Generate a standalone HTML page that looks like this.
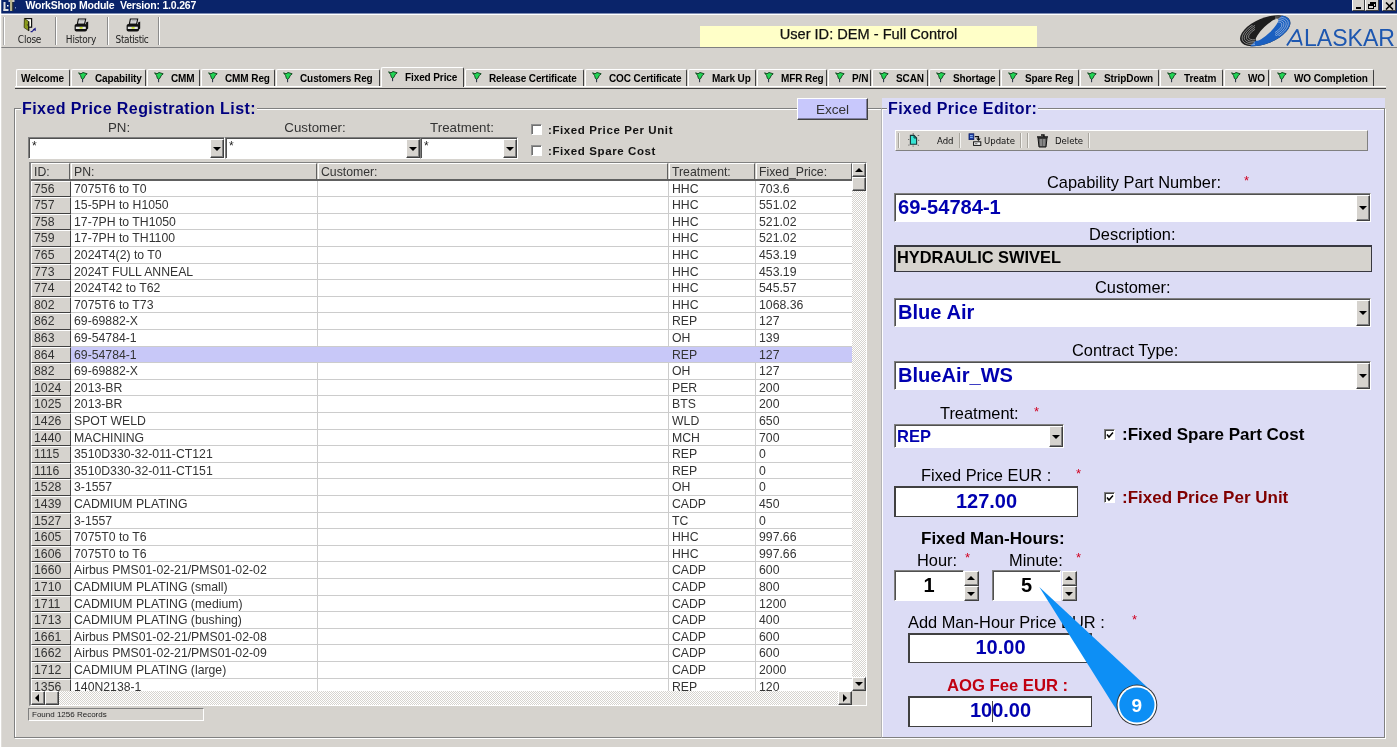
<!DOCTYPE html>
<html><head><meta charset="utf-8"><title>WorkShop Module</title>
<style>
html,body{margin:0;padding:0;}
body{width:1398px;height:749px;overflow:hidden;background:#d6d3ce;position:relative;font-family:"Liberation Sans",sans-serif;color:#000;}
div,span{box-sizing:border-box;}
#wrap{position:absolute;left:0;top:0;width:1398px;height:749px;will-change:transform;}
.abs{position:absolute;}
#winl{position:absolute;left:0;top:0;width:1px;height:749px;background:#fff;z-index:5;box-shadow:1px 0 0 rgba(255,255,255,0.25);}
#winr{position:absolute;left:1397px;top:0;width:1px;height:749px;background:#fff;}
#winb{position:absolute;left:0;top:747px;width:1398px;height:2px;background:#fff;}
#title{position:absolute;left:1px;top:0;width:1396px;height:13px;box-shadow:0 1px 0 #7f8db4;background:#0a246a;color:#fff;font:bold 10.5px "Liberation Sans",sans-serif;letter-spacing:-0.2px;line-height:13.5px;white-space:pre;}
#title span{position:absolute;left:24.5px;top:-1px;}
.tbtn{position:absolute;top:-1px;height:12px;background:#d6d3ce;border:1px solid;border-color:#fff #404040 #404040 #fff;}
#tool{position:absolute;left:1px;top:14px;width:1396px;height:34px;border-top:1px solid #fff;border-bottom:1px solid #808080;}
.sep{position:absolute;top:17px;width:2px;height:28px;border-left:1px solid #8c8c8c;border-right:1px solid #fff;}
.tb{position:absolute;top:33px;font:10px "DejaVu Sans Condensed","Liberation Sans",sans-serif;color:#222;text-align:center;line-height:14px;letter-spacing:-0.25px;}
#user{position:absolute;left:700px;top:26px;width:337px;height:21px;background:#ffffc8;font:14.6px "Liberation Sans",sans-serif;color:#111;text-align:center;line-height:17px;-webkit-text-stroke:0.25px #111;}
#logo{position:absolute;left:1236px;top:15px;width:160px;height:33px;}
/* tabs */
#tabs{position:absolute;left:0;top:0;}
#tabline{position:absolute;left:15px;top:86px;width:1371px;height:3px;border-top:1px solid #fff;border-bottom:1px solid #404040;background:#d6d3ce;}
.tab{position:absolute;top:69px;height:17px;border-left:1px solid #fff;border-top:1px solid #fff;border-right:1px solid #404040;border-radius:2px 2px 0 0;font:bold 10px "Liberation Sans",sans-serif;letter-spacing:-0.1px;color:#000;line-height:17px;white-space:nowrap;text-align:left;}
.tab span{position:absolute;left:23px;top:0;}
.tab:first-child span{left:4px;}
.tab .flag{position:absolute;left:6px;top:2px;}
.tab.sel{top:67px;height:20px;background:#d6d3ce;z-index:2;}
.tab.sel span{top:1px;}
.tab.sel .flag{top:3px;}
/* fieldsets */
.fs{position:absolute;border:1px solid #808080;box-shadow:1px 1px 0 #fff, inset 1px 1px 0 #fff;}
.legend{position:absolute;letter-spacing:0.42px;font:bold 16px "Liberation Sans",sans-serif;color:#000080;white-space:nowrap;line-height:18px;padding:0 1px;}
.lbl{position:absolute;white-space:nowrap;text-align:center;}
.combo{position:absolute;background:#fff;border:1px solid;border-color:#808080 #fff #fff #808080;box-shadow:inset 1px 1px 0 #505050;}
.combo .btn,.sb{position:absolute;background:#d6d3ce;border:1px solid;border-color:#fff #404040 #404040 #fff;box-shadow:inset -1px -1px 0 #808080;}
.arrow{position:absolute;width:0;height:0;border-left:3px solid transparent;border-right:3px solid transparent;border-top:3px solid #000;}
.arrow.big{border-left-width:4px;border-right-width:4px;border-top-width:4px;}
.chk{position:absolute;width:10px;height:10px;background:#fff;border:1px solid;border-color:#808080 #fff #fff #808080;box-shadow:inset 1px 1px 0 #404040;}
/* grid */
#grid{position:absolute;left:29px;top:162px;width:838px;height:544px;background:#fff;border-left:2px solid #808080;border-top:1px solid #808080;border-right:1px solid #fff;border-bottom:1px solid #fff;overflow:hidden;font:12.25px "Liberation Sans",sans-serif;color:#333;}
#grid .hrow{position:absolute;left:0;top:0;width:821px;height:18px;background:#d6d3ce;border-bottom:2px solid #606060;}
#grid .hc{position:absolute;top:0;height:16px;border-left:1px solid #fff;border-top:1px solid #fff;border-right:1px solid #606060;padding-left:2px;line-height:17px;white-space:nowrap;box-sizing:content-box;}
#grid .hc{box-sizing:border-box;width:auto;}
.row{position:absolute;left:0;width:821px;border-bottom:1px solid #cccccc;}
.row .idc{position:absolute;left:0;top:0;width:40px;height:100%;background:#d6d3ce;border-left:1px solid #fff;border-top:1px solid #fff;border-right:1px solid #404040;border-bottom:1px solid #404040;padding-left:2px;line-height:14px;box-sizing:border-box;bottom:-1px;height:calc(100% + 1px);}
.row .c{position:absolute;top:0;height:100%;border-right:1px solid #cccccc;padding-left:3px;line-height:16px;white-space:nowrap;overflow:hidden;}
.c1{left:40px;width:247px;}
.c2{left:287px;width:351px;}
.c3{left:638px;width:87px;}
.c4{left:725px;width:96px;border-right:none !important;}
.rsel .c{background:#c8c8f8;border-right-color:#c8c8f8;}
.dither{background-image:conic-gradient(#fff 25%,#d6d3ce 0 50%,#fff 0 75%,#d6d3ce 0);background-size:2px 2px;}
/* right panel */
#rp{position:absolute;left:882px;top:98px;width:503px;height:639px;background:#dcdcf5;}
.rl{position:absolute;white-space:nowrap;margin-top:1px;font:16.4px "Liberation Sans",sans-serif;color:#000;line-height:18px;}
.red{color:#d00020;}
.inp{position:absolute;background:#fff;border:1px solid #404040;border-top:2px solid #404040;border-left:2px solid #404040;text-align:center;font:bold 20px "Liberation Sans",sans-serif;color:#0000b0;white-space:nowrap;}

</style></head><body><div id="wrap">
<div id="winl"></div><div id="winr"></div><div id="winb"></div>
<div id="title"><svg class="abs" style="left:2px;top:0" width="14" height="13" viewBox="0 0 14 13"><rect x="0.5" y="2" width="2" height="9" fill="#e0e0e0"/><rect x="0.5" y="9" width="5" height="2" fill="#e0e0e0"/><rect x="5.5" y="0" width="6" height="2" fill="#c8c8c8"/><rect x="7" y="0" width="2.4" height="11" fill="#b8b48c"/><rect x="9.4" y="2" width="1" height="9" fill="#303020"/><rect x="4" y="5" width="1.5" height="1.5" fill="#fff"/><rect x="12" y="7" width="1" height="1.5" fill="#8090c0"/></svg><span>WorkShop Module  Version: 1.0.267</span>
<div class="tbtn" style="left:1351px;width:13px"><div class="abs" style="left:3px;top:7px;width:5px;height:2px;background:#000"></div></div>
<div class="tbtn" style="left:1364px;width:14px"><div class="abs" style="left:4px;top:2px;width:6px;height:5px;border:1px solid #000;border-top-width:2px"></div><div class="abs" style="left:2px;top:4px;width:6px;height:5px;border:1px solid #000;border-top-width:2px;background:#d6d3ce"></div></div>
<div class="tbtn" style="left:1381px;width:14px"><svg class="abs" style="left:2px;top:2px" width="9" height="8" viewBox="0 0 9 8"><path d="M1 0.5 L8 7.5 M8 0.5 L1 7.5" stroke="#000" stroke-width="1.6"/></svg></div>
</div>
<div id="tool"></div>
<div class="sep" style="left:3px;border-left-color:#a8a8a8"></div>
<div class="sep" style="left:55px"></div>
<div class="sep" style="left:107px"></div>
<div class="sep" style="left:158px"></div>
<!-- close icon -->
<svg class="abs" style="left:23px;top:17px" width="15" height="16" viewBox="0 0 15 16"><rect x="2.2" y="1.6" width="6.4" height="8.6" fill="#fffff4" stroke="#111" stroke-width="1.2"/><path d="M1.4 1.4 L5.8 4.6 V13.8 L1.1 10.6 Z" fill="#8a9a1c" stroke="#2a2a08" stroke-width="0.7"/><path d="M5.7 4.4 V13.9" stroke="#111" stroke-width="1"/><path d="M3.9 7.6 L4.9 8.2" stroke="#222" stroke-width="0.9"/><path d="M7.6 14.6 H9.4 M9.2 14.4 L11 12.6" stroke="#1c1c88" stroke-width="1.1" fill="none"/><path d="M9.6 12.4 L12.6 10.6 L12.9 14 Z" fill="#1c1c88"/></svg>
<div class="tb" style="left:7px;width:45px">Close</div>
<!-- printer icons -->
<svg class="abs" style="left:74px;top:18px" width="16" height="15" viewBox="0 0 16 15"><path d="M4.4 1 H11.6 L10.6 6 H3.4 Z" fill="#ececec" stroke="#111" stroke-width="1.2"/><path d="M5.5 2.6 H10 M5.2 4 H9.7" stroke="#999" stroke-width="0.7"/><path d="M12 4.6 L14.2 3.6 V10.4 L12.4 12 Z" fill="#111"/><rect x="0.6" y="6" width="12.4" height="7.6" rx="1.8" fill="#111"/><rect x="1.8" y="8.7" width="10" height="2.3" fill="#e4e4e4"/><rect x="5.6" y="9.1" width="3" height="1.5" fill="#c4e010"/></svg>
<div class="tb" style="left:57px;width:48px">History</div>
<svg class="abs" style="left:126px;top:18px" width="16" height="15" viewBox="0 0 16 15"><path d="M4.4 1 H11.6 L10.6 6 H3.4 Z" fill="#ececec" stroke="#111" stroke-width="1.2"/><path d="M5.5 2.6 H10 M5.2 4 H9.7" stroke="#999" stroke-width="0.7"/><path d="M12 4.6 L14.2 3.6 V10.4 L12.4 12 Z" fill="#111"/><rect x="0.6" y="6" width="12.4" height="7.6" rx="1.8" fill="#111"/><rect x="1.8" y="8.7" width="10" height="2.3" fill="#e4e4e4"/><rect x="5.6" y="9.1" width="3" height="1.5" fill="#c4e010"/></svg>
<div class="tb" style="left:108px;width:48px;letter-spacing:-0.4px">Statistic</div>
<div id="user">User ID: DEM - Full Control</div>
<div id="logo"><svg width="162" height="34" viewBox="0 0 162 34">
<defs><clipPath id="lgc"><ellipse cx="0" cy="0" rx="26.7" ry="12.7" transform="translate(29.2,15.8) rotate(-22.5)"/></clipPath>
<clipPath id="lge"><rect x="0" y="10" width="19" height="24"/><rect x="39" y="0" width="20" height="21"/></clipPath></defs>
<ellipse cx="0" cy="0" rx="26.7" ry="12.7" transform="translate(29.2,15.8) rotate(-22.5)" fill="#1e1e1e"/>
<g clip-path="url(#lgc)"><rect x="-40" y="0" width="80" height="40" transform="translate(31,14.8) rotate(-44)" fill="#1a5fc0"/>
<g clip-path="url(#lge)"><g fill="none" stroke="#f0f0f0" stroke-width="0.6" opacity="0.7" transform="translate(29.2,15.8) rotate(-22.5)"><ellipse rx="24.6" ry="11"/><ellipse rx="22.4" ry="9.4"/><ellipse rx="20.2" ry="7.8"/><ellipse rx="18" ry="6.2"/></g></g></g>
<ellipse cx="0" cy="0" rx="15.3" ry="3.8" transform="translate(31,14.8) rotate(-44)" fill="#d6d3ce"/>
<path d="M51 30.6 L61.3 14.6 L65.8 30.6 M55.5 26 H64.5" fill="none" stroke="#1d57b0" stroke-width="1.9" stroke-linejoin="bevel"/>
<text x="68" y="30.6" font-family="Liberation Sans, sans-serif" font-size="23" fill="#1d57b0" textLength="91" lengthAdjust="spacingAndGlyphs">LASKAR</text>
</svg></div>
<div id="tabline"></div>
<div id="tabs">
<div class="tab" style="left:16px;width:54px"><span>Welcome</span></div>
<div class="tab" style="left:71px;width:75px"><svg class="flag" viewBox="0 0 10 11" width="10" height="11"><path d="M0.6 0.8 L3 1.8 L5 0.5 L9.2 1.8 L7.2 3.6 L5.8 6.4 L4.6 7.2 L3.4 6.4 L2.6 3.6 Z" fill="#22d455" stroke="#0c3c18" stroke-width="0.9"/><path d="M4.6 7 L4.6 10.2" stroke="#20283c" stroke-width="1"/></svg><span>Capability</span></div>
<div class="tab" style="left:147px;width:53px"><svg class="flag" viewBox="0 0 10 11" width="10" height="11"><path d="M0.6 0.8 L3 1.8 L5 0.5 L9.2 1.8 L7.2 3.6 L5.8 6.4 L4.6 7.2 L3.4 6.4 L2.6 3.6 Z" fill="#22d455" stroke="#0c3c18" stroke-width="0.9"/><path d="M4.6 7 L4.6 10.2" stroke="#20283c" stroke-width="1"/></svg><span>CMM</span></div>
<div class="tab" style="left:201px;width:74px"><svg class="flag" viewBox="0 0 10 11" width="10" height="11"><path d="M0.6 0.8 L3 1.8 L5 0.5 L9.2 1.8 L7.2 3.6 L5.8 6.4 L4.6 7.2 L3.4 6.4 L2.6 3.6 Z" fill="#22d455" stroke="#0c3c18" stroke-width="0.9"/><path d="M4.6 7 L4.6 10.2" stroke="#20283c" stroke-width="1"/></svg><span>CMM Reg</span></div>
<div class="tab" style="left:276px;width:104px"><svg class="flag" viewBox="0 0 10 11" width="10" height="11"><path d="M0.6 0.8 L3 1.8 L5 0.5 L9.2 1.8 L7.2 3.6 L5.8 6.4 L4.6 7.2 L3.4 6.4 L2.6 3.6 Z" fill="#22d455" stroke="#0c3c18" stroke-width="0.9"/><path d="M4.6 7 L4.6 10.2" stroke="#20283c" stroke-width="1"/></svg><span>Customers Reg</span></div>
<div class="tab sel" style="left:381px;width:83px"><svg class="flag" viewBox="0 0 10 11" width="10" height="11"><path d="M0.6 0.8 L3 1.8 L5 0.5 L9.2 1.8 L7.2 3.6 L5.8 6.4 L4.6 7.2 L3.4 6.4 L2.6 3.6 Z" fill="#22d455" stroke="#0c3c18" stroke-width="0.9"/><path d="M4.6 7 L4.6 10.2" stroke="#20283c" stroke-width="1"/></svg><span>Fixed Price</span></div>
<div class="tab" style="left:465px;width:119px"><svg class="flag" viewBox="0 0 10 11" width="10" height="11"><path d="M0.6 0.8 L3 1.8 L5 0.5 L9.2 1.8 L7.2 3.6 L5.8 6.4 L4.6 7.2 L3.4 6.4 L2.6 3.6 Z" fill="#22d455" stroke="#0c3c18" stroke-width="0.9"/><path d="M4.6 7 L4.6 10.2" stroke="#20283c" stroke-width="1"/></svg><span>Release Certificate</span></div>
<div class="tab" style="left:585px;width:102px"><svg class="flag" viewBox="0 0 10 11" width="10" height="11"><path d="M0.6 0.8 L3 1.8 L5 0.5 L9.2 1.8 L7.2 3.6 L5.8 6.4 L4.6 7.2 L3.4 6.4 L2.6 3.6 Z" fill="#22d455" stroke="#0c3c18" stroke-width="0.9"/><path d="M4.6 7 L4.6 10.2" stroke="#20283c" stroke-width="1"/></svg><span>COC Certificate</span></div>
<div class="tab" style="left:688px;width:68px"><svg class="flag" viewBox="0 0 10 11" width="10" height="11"><path d="M0.6 0.8 L3 1.8 L5 0.5 L9.2 1.8 L7.2 3.6 L5.8 6.4 L4.6 7.2 L3.4 6.4 L2.6 3.6 Z" fill="#22d455" stroke="#0c3c18" stroke-width="0.9"/><path d="M4.6 7 L4.6 10.2" stroke="#20283c" stroke-width="1"/></svg><span>Mark Up</span></div>
<div class="tab" style="left:757px;width:70px"><svg class="flag" viewBox="0 0 10 11" width="10" height="11"><path d="M0.6 0.8 L3 1.8 L5 0.5 L9.2 1.8 L7.2 3.6 L5.8 6.4 L4.6 7.2 L3.4 6.4 L2.6 3.6 Z" fill="#22d455" stroke="#0c3c18" stroke-width="0.9"/><path d="M4.6 7 L4.6 10.2" stroke="#20283c" stroke-width="1"/></svg><span>MFR Reg</span></div>
<div class="tab" style="left:828px;width:43px"><svg class="flag" viewBox="0 0 10 11" width="10" height="11"><path d="M0.6 0.8 L3 1.8 L5 0.5 L9.2 1.8 L7.2 3.6 L5.8 6.4 L4.6 7.2 L3.4 6.4 L2.6 3.6 Z" fill="#22d455" stroke="#0c3c18" stroke-width="0.9"/><path d="M4.6 7 L4.6 10.2" stroke="#20283c" stroke-width="1"/></svg><span>P/N</span></div>
<div class="tab" style="left:872px;width:56px"><svg class="flag" viewBox="0 0 10 11" width="10" height="11"><path d="M0.6 0.8 L3 1.8 L5 0.5 L9.2 1.8 L7.2 3.6 L5.8 6.4 L4.6 7.2 L3.4 6.4 L2.6 3.6 Z" fill="#22d455" stroke="#0c3c18" stroke-width="0.9"/><path d="M4.6 7 L4.6 10.2" stroke="#20283c" stroke-width="1"/></svg><span>SCAN</span></div>
<div class="tab" style="left:929px;width:71px"><svg class="flag" viewBox="0 0 10 11" width="10" height="11"><path d="M0.6 0.8 L3 1.8 L5 0.5 L9.2 1.8 L7.2 3.6 L5.8 6.4 L4.6 7.2 L3.4 6.4 L2.6 3.6 Z" fill="#22d455" stroke="#0c3c18" stroke-width="0.9"/><path d="M4.6 7 L4.6 10.2" stroke="#20283c" stroke-width="1"/></svg><span>Shortage</span></div>
<div class="tab" style="left:1001px;width:78px"><svg class="flag" viewBox="0 0 10 11" width="10" height="11"><path d="M0.6 0.8 L3 1.8 L5 0.5 L9.2 1.8 L7.2 3.6 L5.8 6.4 L4.6 7.2 L3.4 6.4 L2.6 3.6 Z" fill="#22d455" stroke="#0c3c18" stroke-width="0.9"/><path d="M4.6 7 L4.6 10.2" stroke="#20283c" stroke-width="1"/></svg><span>Spare Reg</span></div>
<div class="tab" style="left:1080px;width:79px"><svg class="flag" viewBox="0 0 10 11" width="10" height="11"><path d="M0.6 0.8 L3 1.8 L5 0.5 L9.2 1.8 L7.2 3.6 L5.8 6.4 L4.6 7.2 L3.4 6.4 L2.6 3.6 Z" fill="#22d455" stroke="#0c3c18" stroke-width="0.9"/><path d="M4.6 7 L4.6 10.2" stroke="#20283c" stroke-width="1"/></svg><span>StripDown</span></div>
<div class="tab" style="left:1160px;width:63px"><svg class="flag" viewBox="0 0 10 11" width="10" height="11"><path d="M0.6 0.8 L3 1.8 L5 0.5 L9.2 1.8 L7.2 3.6 L5.8 6.4 L4.6 7.2 L3.4 6.4 L2.6 3.6 Z" fill="#22d455" stroke="#0c3c18" stroke-width="0.9"/><path d="M4.6 7 L4.6 10.2" stroke="#20283c" stroke-width="1"/></svg><span>Treatm</span></div>
<div class="tab" style="left:1224px;width:45px"><svg class="flag" viewBox="0 0 10 11" width="10" height="11"><path d="M0.6 0.8 L3 1.8 L5 0.5 L9.2 1.8 L7.2 3.6 L5.8 6.4 L4.6 7.2 L3.4 6.4 L2.6 3.6 Z" fill="#22d455" stroke="#0c3c18" stroke-width="0.9"/><path d="M4.6 7 L4.6 10.2" stroke="#20283c" stroke-width="1"/></svg><span>WO</span></div>
<div class="tab" style="left:1270px;width:104px"><svg class="flag" viewBox="0 0 10 11" width="10" height="11"><path d="M0.6 0.8 L3 1.8 L5 0.5 L9.2 1.8 L7.2 3.6 L5.8 6.4 L4.6 7.2 L3.4 6.4 L2.6 3.6 Z" fill="#22d455" stroke="#0c3c18" stroke-width="0.9"/><path d="M4.6 7 L4.6 10.2" stroke="#20283c" stroke-width="1"/></svg><span>WO Completion</span></div>
</div>
<div class="fs" style="left:14px;top:108px;width:880px;height:630px"></div>
<div class="legend" style="left:21px;top:99.5px;background:#d6d3ce">Fixed Price Registration List:</div>
<div class="lbl" style="left:79px;top:119px;width:80px;font-size:13.3px;color:#333;line-height:18px">PN:</div>
<div class="lbl" style="left:265px;top:119px;width:100px;font-size:13.3px;color:#333;line-height:18px">Customer:</div>
<div class="lbl" style="left:412px;top:119px;width:100px;font-size:13.3px;color:#333;line-height:18px">Treatment:</div>
<div class="combo" style="left:28px;top:137px;width:197px;height:22px"><span class="abs" style="left:3px;top:2px;font-size:12px;line-height:12px;color:#222">*</span><div class="btn" style="right:0;top:1px;width:14px;height:19px"><div class="arrow big" style="left:2px;top:7px"></div></div></div>
<div class="combo" style="left:225px;top:137px;width:196px;height:22px"><span class="abs" style="left:3px;top:2px;font-size:12px;line-height:12px;color:#222">*</span><div class="btn" style="right:0;top:1px;width:14px;height:19px"><div class="arrow big" style="left:2px;top:7px"></div></div></div>
<div class="combo" style="left:420px;top:137px;width:98px;height:22px"><span class="abs" style="left:3px;top:2px;font-size:12px;line-height:12px;color:#222">*</span><div class="btn" style="right:0;top:1px;width:14px;height:19px"><div class="arrow big" style="left:2px;top:7px"></div></div></div>
<div class="chk" style="left:531px;top:124px;width:11px;height:11px;border-color:#909090 #fff #fff #909090;box-shadow:inset 1px 1px 0 #707070"></div>
<div class="chk" style="left:531px;top:145px;width:11px;height:11px;border-color:#909090 #fff #fff #909090;box-shadow:inset 1px 1px 0 #707070"></div>
<div class="lbl" style="left:548px;top:123px;font:bold 11.5px 'Liberation Sans',sans-serif;letter-spacing:0.6px;color:#111;line-height:14px">:Fixed Price Per Unit</div>
<div class="lbl" style="left:548px;top:144px;font:bold 11.5px 'Liberation Sans',sans-serif;letter-spacing:0.6px;color:#111;line-height:14px">:Fixed Spare Cost</div>
<div class="abs" style="left:797px;top:98px;width:71px;height:22px;background:#c8c8fc;border:1px solid;border-color:#fff #404040 #404040 #fff;box-shadow:inset -1px -1px 0 #8080a0;font-size:13.6px;color:#333;text-align:center;line-height:22px">Excel</div>
<div id="grid">
<div class="hrow"><div class="hc" style="left:0;width:39px">ID:</div><div class="hc" style="left:40px;width:246px">PN:</div><div class="hc" style="left:287px;width:350px">Customer:</div><div class="hc" style="left:638px;width:86px">Treatment:</div><div class="hc" style="left:725px;width:96px">Fixed_Price:</div></div>
<div class="row" style="top:18px;height:16px"><div class="idc">756</div><div class="c c1">7075T6 to T0</div><div class="c c2"></div><div class="c c3">HHC</div><div class="c c4">703.6</div></div>
<div class="row" style="top:34px;height:17px"><div class="idc">757</div><div class="c c1">15-5PH to H1050</div><div class="c c2"></div><div class="c c3">HHC</div><div class="c c4">551.02</div></div>
<div class="row" style="top:51px;height:16px"><div class="idc">758</div><div class="c c1">17-7PH to TH1050</div><div class="c c2"></div><div class="c c3">HHC</div><div class="c c4">521.02</div></div>
<div class="row" style="top:67px;height:17px"><div class="idc">759</div><div class="c c1">17-7PH to TH1100</div><div class="c c2"></div><div class="c c3">HHC</div><div class="c c4">521.02</div></div>
<div class="row" style="top:84px;height:17px"><div class="idc">765</div><div class="c c1">2024T4(2) to T0</div><div class="c c2"></div><div class="c c3">HHC</div><div class="c c4">453.19</div></div>
<div class="row" style="top:101px;height:16px"><div class="idc">773</div><div class="c c1">2024T FULL ANNEAL</div><div class="c c2"></div><div class="c c3">HHC</div><div class="c c4">453.19</div></div>
<div class="row" style="top:117px;height:17px"><div class="idc">774</div><div class="c c1">2024T42 to T62</div><div class="c c2"></div><div class="c c3">HHC</div><div class="c c4">545.57</div></div>
<div class="row" style="top:134px;height:16px"><div class="idc">802</div><div class="c c1">7075T6 to T73</div><div class="c c2"></div><div class="c c3">HHC</div><div class="c c4">1068.36</div></div>
<div class="row" style="top:150px;height:17px"><div class="idc">862</div><div class="c c1">69-69882-X</div><div class="c c2"></div><div class="c c3">REP</div><div class="c c4">127</div></div>
<div class="row" style="top:167px;height:17px"><div class="idc">863</div><div class="c c1">69-54784-1</div><div class="c c2"></div><div class="c c3">OH</div><div class="c c4">139</div></div>
<div class="row rsel" style="top:184px;height:16px"><div class="idc">864</div><div class="c c1">69-54784-1</div><div class="c c2"></div><div class="c c3">REP</div><div class="c c4">127</div></div>
<div class="row" style="top:200px;height:17px"><div class="idc">882</div><div class="c c1">69-69882-X</div><div class="c c2"></div><div class="c c3">OH</div><div class="c c4">127</div></div>
<div class="row" style="top:217px;height:16px"><div class="idc">1024</div><div class="c c1">2013-BR</div><div class="c c2"></div><div class="c c3">PER</div><div class="c c4">200</div></div>
<div class="row" style="top:233px;height:17px"><div class="idc">1025</div><div class="c c1">2013-BR</div><div class="c c2"></div><div class="c c3">BTS</div><div class="c c4">200</div></div>
<div class="row" style="top:250px;height:17px"><div class="idc">1426</div><div class="c c1">SPOT WELD</div><div class="c c2"></div><div class="c c3">WLD</div><div class="c c4">650</div></div>
<div class="row" style="top:267px;height:16px"><div class="idc">1440</div><div class="c c1">MACHINING</div><div class="c c2"></div><div class="c c3">MCH</div><div class="c c4">700</div></div>
<div class="row" style="top:283px;height:17px"><div class="idc">1115</div><div class="c c1">3510D330-32-011-CT121</div><div class="c c2"></div><div class="c c3">REP</div><div class="c c4">0</div></div>
<div class="row" style="top:300px;height:16px"><div class="idc">1116</div><div class="c c1">3510D330-32-011-CT151</div><div class="c c2"></div><div class="c c3">REP</div><div class="c c4">0</div></div>
<div class="row" style="top:316px;height:17px"><div class="idc">1528</div><div class="c c1">3-1557</div><div class="c c2"></div><div class="c c3">OH</div><div class="c c4">0</div></div>
<div class="row" style="top:333px;height:17px"><div class="idc">1439</div><div class="c c1">CADMIUM PLATING</div><div class="c c2"></div><div class="c c3">CADP</div><div class="c c4">450</div></div>
<div class="row" style="top:350px;height:16px"><div class="idc">1527</div><div class="c c1">3-1557</div><div class="c c2"></div><div class="c c3">TC</div><div class="c c4">0</div></div>
<div class="row" style="top:366px;height:17px"><div class="idc">1605</div><div class="c c1">7075T0 to T6</div><div class="c c2"></div><div class="c c3">HHC</div><div class="c c4">997.66</div></div>
<div class="row" style="top:383px;height:16px"><div class="idc">1606</div><div class="c c1">7075T0 to T6</div><div class="c c2"></div><div class="c c3">HHC</div><div class="c c4">997.66</div></div>
<div class="row" style="top:399px;height:17px"><div class="idc">1660</div><div class="c c1">Airbus PMS01-02-21/PMS01-02-02</div><div class="c c2"></div><div class="c c3">CADP</div><div class="c c4">600</div></div>
<div class="row" style="top:416px;height:17px"><div class="idc">1710</div><div class="c c1">CADMIUM PLATING (small)</div><div class="c c2"></div><div class="c c3">CADP</div><div class="c c4">800</div></div>
<div class="row" style="top:433px;height:16px"><div class="idc">1711</div><div class="c c1">CADMIUM PLATING (medium)</div><div class="c c2"></div><div class="c c3">CADP</div><div class="c c4">1200</div></div>
<div class="row" style="top:449px;height:17px"><div class="idc">1713</div><div class="c c1">CADMIUM PLATING (bushing)</div><div class="c c2"></div><div class="c c3">CADP</div><div class="c c4">400</div></div>
<div class="row" style="top:466px;height:16px"><div class="idc">1661</div><div class="c c1">Airbus PMS01-02-21/PMS01-02-08</div><div class="c c2"></div><div class="c c3">CADP</div><div class="c c4">600</div></div>
<div class="row" style="top:482px;height:17px"><div class="idc">1662</div><div class="c c1">Airbus PMS01-02-21/PMS01-02-09</div><div class="c c2"></div><div class="c c3">CADP</div><div class="c c4">600</div></div>
<div class="row" style="top:499px;height:17px"><div class="idc">1712</div><div class="c c1">CADMIUM PLATING (large)</div><div class="c c2"></div><div class="c c3">CADP</div><div class="c c4">2000</div></div>
<div class="row" style="top:516px;height:16px"><div class="idc">1356</div><div class="c c1">140N2138-1</div><div class="c c2"></div><div class="c c3">REP</div><div class="c c4">120</div></div>
<div class="abs dither" style="left:821px;top:0;width:14px;height:528px"></div>
<div class="sb" style="left:821px;top:0;width:14px;height:14px"><div class="arrow big" style="left:2px;top:4px;border-top:none;border-bottom:4px solid #000"></div></div>
<div class="sb" style="left:821px;top:14px;width:14px;height:14px"></div>
<div class="sb" style="left:821px;top:514px;width:14px;height:14px"><div class="arrow big" style="left:2px;top:4px"></div></div>
<div class="abs dither" style="left:0;top:528px;width:821px;height:14px"></div>
<div class="abs" style="left:821px;top:528px;width:14px;height:14px;background:#d6d3ce"></div>
<div class="sb" style="left:0;top:528px;width:14px;height:14px"><div class="arrow" style="left:3px;top:2px;border:none;border-top:4px solid transparent;border-bottom:4px solid transparent;border-right:4px solid #000"></div></div>
<div class="sb" style="left:14px;top:528px;width:14px;height:14px"></div>
<div class="sb" style="left:807px;top:528px;width:14px;height:14px"><div class="arrow" style="left:4px;top:2px;border:none;border-top:4px solid transparent;border-bottom:4px solid transparent;border-left:4px solid #000"></div></div>

</div>
<div class="abs" style="left:28px;top:708px;width:176px;height:13px;border:1px solid;border-color:#808080 #fff #fff #808080;font:8px 'Liberation Sans',sans-serif;color:#222;line-height:11px;padding-left:3px">Found 1256 Records</div>
<div id="rp">
<div class="fs" style="left:-1px;top:10px;width:504px;height:630px;border-left-color:#b4b4b4;box-shadow:1px 1px 0 #fff, inset 1px 1px 0 #fff"></div>
<div class="legend" style="left:5px;top:2px;background:#dcdcf5">Fixed Price Editor:</div>
<!-- toolbar -->
<div class="abs" style="left:13px;top:32px;width:473px;height:21px;background:#d6d3ce;border:1px solid;border-color:#fff #808080 #808080 #fff"></div>
<div class="abs" style="left:16px;top:35px;width:2px;height:15px;border-left:1px solid #a8a59e;border-right:1px solid #f4f3f0"></div>
<div class="abs" style="left:77px;top:35px;width:2px;height:15px;border-left:1px solid #a8a59e;border-right:1px solid #f4f3f0"></div>
<div class="abs" style="left:138px;top:35px;width:2px;height:15px;border-left:1px solid #a8a59e;border-right:1px solid #f4f3f0"></div>
<div class="abs" style="left:145px;top:35px;width:2px;height:15px;border-left:1px solid #a8a59e;border-right:1px solid #f4f3f0"></div>
<div class="abs" style="left:206px;top:35px;width:2px;height:15px;border-left:1px solid #a8a59e;border-right:1px solid #f4f3f0"></div>
<svg class="abs" style="left:25px;top:35px" width="15" height="15" viewBox="0 0 15 15"><path d="M3.4 2.4 H7 L9.6 5 V11.2 H3.4 Z" fill="#36e4d4" stroke="#143838" stroke-width="1.1"/><path d="M7 2.4 V5 H9.6" fill="none" stroke="#143838" stroke-width="0.9"/><path d="M6.2 0.4 V1.6" stroke="#333" stroke-width="1"/><g fill="#555"><rect x="1.2" y="6" width="1" height="1"/><rect x="1.4" y="11.6" width="1" height="1"/><rect x="5.6" y="12.6" width="1" height="1"/><rect x="11.2" y="6.8" width="1" height="1"/><rect x="10.6" y="2.2" width="1.6" height="0.8"/><rect x="10.8" y="11.8" width="1" height="1"/></g></svg>
<div class="abs" style="left:55px;top:36px;font:9.5px 'DejaVu Sans Condensed','Liberation Sans',sans-serif;color:#111;line-height:13.5px">Add</div>
<svg class="abs" style="left:86px;top:35px" width="15" height="14" viewBox="0 0 15 14"><rect x="1" y="0.8" width="4.8" height="5.8" fill="#1c3ca8" stroke="#0c1c60" stroke-width="0.8"/><path d="M2 2.6 H4.8 M2 4.4 H4.8" stroke="#9cc4f4" stroke-width="0.9"/><path d="M6.8 3.6 H10.4 V6" fill="none" stroke="#111" stroke-width="1.3"/><path d="M8.2 5.6 H12.8 L10.5 8 Z" fill="#111"/><rect x="5.6" y="8.8" width="7.2" height="3.6" fill="#f4f4f4" stroke="#111" stroke-width="1"/><rect x="7" y="10" width="2.4" height="1.2" fill="#888"/></svg>
<div class="abs" style="left:102px;top:36px;font:9.5px 'DejaVu Sans Condensed','Liberation Sans',sans-serif;color:#111;line-height:13.5px">Update</div>
<svg class="abs" style="left:154px;top:35px" width="13" height="15" viewBox="0 0 13 15"><path d="M2 5 H11 L10 14 H3 Z" fill="#606060" stroke="#101010" stroke-width="1"/><path d="M1 4 H12 M5 2 H8 V4" stroke="#101010" stroke-width="1.4" fill="none"/><path d="M5 6 V13 M8 6 V13" stroke="#c0c0c0" stroke-width="0.8"/></svg>
<div class="abs" style="left:173px;top:36px;font:9.5px 'DejaVu Sans Condensed','Liberation Sans',sans-serif;color:#111;line-height:13.5px">Delete</div>

<div class="rl" style="left:165px;top:74px">Capability Part Number:</div><div class="rl red" style="left:362px;top:73px;font-size:13px">*</div>
<div class="combo" style="left:12px;top:95px;width:477px;height:29px"><span class="abs" style="left:3px;top:2px;font:bold 20.1px 'Liberation Sans',sans-serif;color:#0000b0;line-height:22px">69-54784-1</span><div class="btn" style="right:0;top:1px;width:14px;height:26px"><div class="arrow big" style="left:2px;top:10px"></div></div></div>
<div class="rl" style="left:207px;top:126px">Description:</div>
<div class="abs" style="left:12px;top:147px;width:478px;height:27px;background:#d6d3ce;border:1px solid #383840;border-top-width:2px;border-left-width:2px"><span class="abs" style="left:1px;top:0;font:bold 16.4px 'Liberation Sans',sans-serif;color:#000;line-height:20px">HYDRAULIC SWIVEL</span></div>
<div class="rl" style="left:213px;top:179px">Customer:</div>
<div class="combo" style="left:12px;top:200px;width:477px;height:29px"><span class="abs" style="left:3px;top:2px;font:bold 20.1px 'Liberation Sans',sans-serif;color:#0000b0;line-height:22px">Blue Air</span><div class="btn" style="right:0;top:1px;width:14px;height:26px"><div class="arrow big" style="left:2px;top:10px"></div></div></div>
<div class="rl" style="left:190px;top:242px">Contract Type:</div>
<div class="combo" style="left:12px;top:263px;width:477px;height:29px"><span class="abs" style="left:3px;top:2px;font:bold 20.1px 'Liberation Sans',sans-serif;color:#0000b0;line-height:22px">BlueAir_WS</span><div class="btn" style="right:0;top:1px;width:14px;height:26px"><div class="arrow big" style="left:2px;top:10px"></div></div></div>
<div class="rl" style="left:58px;top:304.5px">Treatment:</div><div class="rl red" style="left:152px;top:304px;font-size:13px">*</div>
<div class="combo" style="left:12px;top:326px;width:170px;height:24px"><span class="abs" style="left:2px;top:1px;font:bold 16.5px 'Liberation Sans',sans-serif;color:#0000b0;line-height:20px">REP</span><div class="btn" style="right:0;top:1px;width:14px;height:21px"><div class="arrow big" style="left:2px;top:8px"></div></div></div>
<div class="chk" style="left:222px;top:331px;width:11px;height:11px"><svg class="abs" style="left:1px;top:1px" width="8" height="8" viewBox="0 0 8 8"><path d="M1 3.5 L3 6 L7 1.5" stroke="#000" stroke-width="1.5" fill="none"/></svg></div>
<div class="rl" style="left:240px;top:326px;font:bold 17px 'Liberation Sans',sans-serif;line-height:20px">:Fixed Spare Part Cost</div>
<div class="rl" style="left:39px;top:367px">Fixed Price EUR :</div><div class="rl red" style="left:194px;top:366px;font-size:13px">*</div>
<div class="inp" style="left:12px;top:388px;width:184px;height:31px;line-height:26px">127.00</div>
<div class="chk" style="left:222px;top:394px;width:11px;height:11px"><svg class="abs" style="left:1px;top:1px" width="8" height="8" viewBox="0 0 8 8"><path d="M1 3.5 L3 6 L7 1.5" stroke="#000" stroke-width="1.5" fill="none"/></svg></div>
<div class="rl" style="left:240px;top:389px;font:bold 17px 'Liberation Sans',sans-serif;color:#800000;line-height:20px">:Fixed Price Per Unit</div>
<div class="rl" style="left:39px;top:430px;font:bold 17px 'Liberation Sans',sans-serif;line-height:20px">Fixed Man-Hours:</div>
<div class="rl" style="left:35px;top:452px">Hour:</div><div class="rl red" style="left:83px;top:450px;font-size:13px">*</div>
<div class="rl" style="left:127px;top:452px">Minute:</div><div class="rl red" style="left:194px;top:450px;font-size:13px">*</div>
<div class="combo" style="left:12px;top:472px;width:70px;height:31px;text-align:center;font:bold 20px 'Liberation Sans',sans-serif;color:#000;line-height:28px">1</div>
<div class="sb" style="left:82px;top:473px;width:15px;height:15px"><div class="arrow big" style="left:2px;top:4px;border-top:none;border-bottom:4px solid #000"></div></div>
<div class="sb" style="left:82px;top:488px;width:15px;height:15px"><div class="arrow big" style="left:2px;top:5px"></div></div>
<div class="combo" style="left:110px;top:472px;width:69px;height:31px;text-align:center;font:bold 20px 'Liberation Sans',sans-serif;color:#000;line-height:28px">5</div>
<div class="sb" style="left:180px;top:473px;width:15px;height:15px"><div class="arrow big" style="left:2px;top:4px;border-top:none;border-bottom:4px solid #000"></div></div>
<div class="sb" style="left:180px;top:488px;width:15px;height:15px"><div class="arrow big" style="left:2px;top:5px"></div></div>
<div class="rl" style="left:26px;top:514px">Add Man-Hour Price EUR :</div><div class="rl red" style="left:250px;top:512px;font-size:13px">*</div>
<div class="inp" style="left:26px;top:535px;width:184px;height:30px;line-height:24px">10.00</div>
<div class="rl" style="left:65px;top:576.5px;font:bold 16.65px 'Liberation Sans',sans-serif;color:#c00010;line-height:20px">AOG Fee EUR :</div>
<div class="inp" style="left:26px;top:598px;width:184px;height:31px;line-height:24px">100.00<div class="abs" style="left:82px;top:3px;width:1px;height:21px;background:#444"></div></div>
<!-- callout -->
<svg class="abs" style="left:140px;top:470px" width="150" height="170" viewBox="0 0 150 170"><path d="M17.3 19 L128.5 122.3 L98 147.6 Z" fill="#0d8ff5"/><circle cx="114.9" cy="137" r="20.4" fill="#333"/><circle cx="114.9" cy="137" r="19.4" fill="#fff"/><circle cx="114.9" cy="137" r="17.6" fill="#0d8ff5"/><text x="114.9" y="143.8" text-anchor="middle" font-family="Liberation Sans, sans-serif" font-weight="bold" font-size="19" fill="#fff">9</text></svg>
</div>
</div></body></html>
